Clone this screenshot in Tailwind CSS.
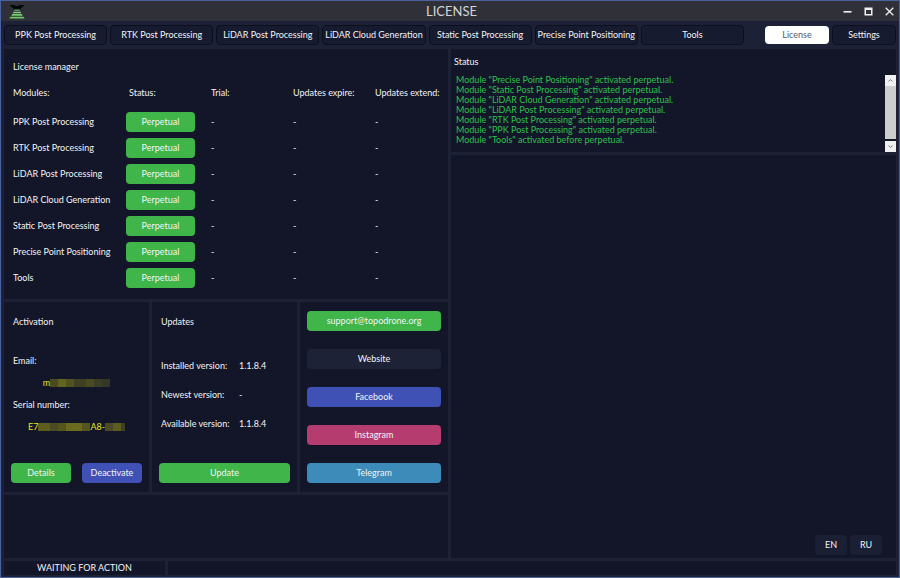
<!DOCTYPE html>
<html lang="en">

<head>
    <meta charset="UTF-8" />
    <meta name="viewport" content="width=device-width, initial-scale=1.0" />
    <title>License</title>
    <script src="https://cdn.jsdelivr.net/npm/@tailwindcss/browser@4"></script>
</head>

<body class="bg-[#1d2136]">
    <div class="flex h-screen flex-col border border-[#4a62a0] bg-[#1d2136] font-[Lato,sans-serif] text-[9px] leading-3 text-[#f2f3f6]">

        <!-- title bar -->
        <header class="flex h-5 shrink-0 items-center bg-[#303138] pr-[5px] pl-2">
            <div class="flex-1">
                <svg class="h-[15px] w-4" viewBox="0 0 16 15" fill="none">
                    <path d="M1 1h5v1h4V1h5v1.500h-2V4h-1.500v1.500h-7V4H3V2.500H1z" fill="#050608" />
                    <path d="M5.500 5.500h5l.5 1.500H5z" fill="#4f9457" />
                    <path d="M4.500 7.700h7l.7 1.600H3.800z" fill="#8cc487" />
                    <path d="M3.200 10h9.600l.8 1.800H2.400z" fill="#74d069" />
                    <path d="M1.600 12.700h12.800l1.300 1.800H.3z" fill="#6acb5f" />
                </svg>
            </div>
            <h1 class="text-[13px] leading-4 text-[#d3d4d8]">LICENSE</h1>
            <div class="flex flex-1 justify-end gap-3">
                <button aria-label="Minimize" class="h-[9px] w-[9px]">
                    <svg class="h-[9px] w-[9px]" viewBox="0 0 9 9"><path d="M0.500 4h8v1.600h-8z" fill="#f0f0f2" /></svg>
                </button>
                <button aria-label="Maximize" class="h-[9px] w-[9px]">
                    <svg class="h-[9px] w-[9px]" viewBox="0 0 9 9"><path d="M0.500 0.500h8v8h-8zM2 3v4h5V3z" fill="#f0f0f2" fill-rule="evenodd" /></svg>
                </button>
                <button aria-label="Close" class="h-[9px] w-[9px]">
                    <svg class="h-[9px] w-[9px]" viewBox="0 0 9 9"><path d="M.7.7l7.600 7.600M8.300.7L.7 8.300" stroke="#f0f0f2" stroke-width="1.300" /></svg>
                </button>
            </div>
        </header>

        <!-- modules -->
        <nav class="flex h-7 shrink-0 items-center gap-[3px] px-[3px]">
            <button class="h-5 min-w-0 flex-1 rounded-sm border border-[#0c0f1e] bg-[#171b30] whitespace-nowrap">PPK Post Processing</button>
            <button class="h-5 min-w-0 flex-1 rounded-sm border border-[#0c0f1e] bg-[#171b30] whitespace-nowrap">RTK Post Processing</button>
            <button class="h-5 min-w-0 flex-1 rounded-sm border border-[#0c0f1e] bg-[#171b30] whitespace-nowrap">LiDAR Post Processing</button>
            <button class="h-5 min-w-0 flex-1 rounded-sm border border-[#0c0f1e] bg-[#171b30] whitespace-nowrap">LiDAR Cloud Generation</button>
            <button class="h-5 min-w-0 flex-1 rounded-sm border border-[#0c0f1e] bg-[#171b30] whitespace-nowrap">Static Post Processing</button>
            <button class="h-5 min-w-0 flex-1 rounded-sm border border-[#0c0f1e] bg-[#171b30] whitespace-nowrap">Precise Point Positioning</button>
            <button class="h-5 min-w-0 flex-1 rounded-sm border border-[#0c0f1e] bg-[#171b30] whitespace-nowrap">Tools</button>
            <button class="ml-[18px] h-[18px] w-16 rounded-sm bg-white text-[#55586a]">License</button>
            <button class="h-5 w-16 rounded-sm border border-[#0c0f1e] bg-[#171b30]">Settings</button>
        </nav>

        <main class="grid min-h-0 flex-1 grid-cols-[444fr_445fr] gap-[3px] px-[3px]">
            <div class="flex min-w-0 flex-col gap-[3px]">
                <section class="bg-[#131628] px-[9px] pt-3 pb-2">
                    <h2>License manager</h2>
                    <table class="mt-3 w-full table-fixed text-left">
                        <thead>
                            <tr class="h-4">
                                <th class="w-[113px] p-0 font-normal">Modules:</th>
                                <th class="w-[85px] p-0 pl-[3px] font-normal">Status:</th>
                                <th class="w-[82px] p-0 font-normal">Trial:</th>
                                <th class="w-[82px] p-0 font-normal">Updates expire:</th>
                                <th class="p-0 font-normal whitespace-nowrap">Updates extend:</th>
                            </tr>
                            <tr class="h-2"></tr>
                        </thead>
                        <tbody id="modules"></tbody>
                    </table>
                </section>

                <div class="grid h-[190px] shrink-0 grid-cols-[145fr_145fr_148fr] gap-[3px]">
                    <section class="flex flex-col bg-[#131628] px-[7px] pt-[14px] pb-[9px]">
                        <h2 class="px-[2px]">Activation</h2>
                        <p class="mt-[27px] px-[2px]">Email:</p>
                        <p class="mt-[10px] flex items-center justify-center text-[#e6e61c]">
                            <span>m</span>
                            <span class="flex h-2">
                                <i class="w-2 bg-[#4a4b1f]"></i><i class="w-2 bg-[#62631f]"></i><i class="w-2 bg-[#515220]"></i><i class="w-3 bg-[#3e4023]"></i><i class="w-2 bg-[#4a4b22]"></i><i class="w-2 bg-[#3c3d25]"></i><i class="w-2 bg-[#343626]"></i>
                            </span>
                        </p>
                        <p class="mt-[10px] px-[2px]">Serial number:</p>
                        <p class="mt-[10px] flex items-center justify-center text-[#e6e61c]">
                            <span>E7</span>
                            <span class="flex h-2">
                                <i class="w-3 bg-[#5c5d1f]"></i><i class="w-2 bg-[#4a4b22]"></i><i class="w-2 bg-[#55561f]"></i><i class="w-4 bg-[#6a6b1e]"></i><i class="w-2 bg-[#55561f]"></i>
                            </span>
                            <span>A8-</span>
                            <span class="flex h-2">
                                <i class="w-2 bg-[#4a4b22]"></i><i class="w-2 bg-[#5c5d1f]"></i><i class="w-1 bg-[#3e4023]"></i>
                            </span>
                        </p>
                        <div class="mt-auto flex justify-between">
                            <button class="h-5 w-[60px] rounded-sm bg-[#3fb54a]">Details</button>
                            <button class="h-5 w-[60px] rounded-sm bg-[#3f51b5]">Deactivate</button>
                        </div>
                    </section>

                    <section class="flex flex-col bg-[#131628] px-[7px] pt-[14px] pb-[9px]">
                        <h2 class="px-[2px]">Updates</h2>
                        <dl class="mt-8 grid grid-cols-[78px_1fr] gap-y-[17px] px-[2px]">
                            <dt>Installed version:</dt>
                            <dd>1.1.8.4</dd>
                            <dt>Newest version:</dt>
                            <dd>-</dd>
                            <dt>Available version:</dt>
                            <dd>1.1.8.4</dd>
                        </dl>
                        <button class="mt-auto h-5 rounded-sm bg-[#3fb54a]">Update</button>
                    </section>

                    <section class="flex flex-col justify-between bg-[#131628] px-[7px] py-[9px] text-center leading-5">
                        <a href="mailto:support@topodrone.org" class="rounded-sm bg-[#3fb54a]">support@topodrone.org</a>
                        <a href="#" class="rounded-sm bg-[#1e2237]">Website</a>
                        <a href="#" class="rounded-sm bg-[#3f51b5]">Facebook</a>
                        <a href="#" class="rounded-sm bg-[#b53c6f]">Instagram</a>
                        <a href="#" class="rounded-sm bg-[#3c8bb8]">Telegram</a>
                    </section>
                </div>

                <section class="flex-1 bg-[#131628]"></section>
            </div>

            <div class="flex min-w-0 flex-col gap-[3px]">
                <section class="bg-[#131628] pt-[7px]">
                    <h2 class="px-[3px]">Status</h2>
                    <div class="mt-[7px] flex h-[77px] justify-between">
                        <div class="pl-[5px] leading-[10px] text-[#30c04e]">
                            <p>Module "Precise Point Positioning" activated perpetual.</p>
                            <p>Module "Static Post Processing" activated perpetual.</p>
                            <p>Module "LiDAR Cloud Generation" activated perpetual.</p>
                            <p>Module "LiDAR Post Processing" activated perpetual.</p>
                            <p>Module "RTK Post Processing" activated perpetual.</p>
                            <p>Module "PPK Post Processing" activated perpetual.</p>
                            <p>Module "Tools" activated before perpetual.</p>
                        </div>
                        <div class="flex w-[11px] flex-col">
                            <button aria-label="Scroll up" class="flex h-[11px] items-center justify-center bg-[#f0f0f0]">
                                <svg class="h-[5px] w-[5px]" viewBox="0 0 5 5" fill="none" stroke="#777"><path d="M.5 3.500l2-2 2 2" /></svg>
                            </button>
                            <div class="mb-[2px] flex-1 bg-[#cdcdcd]"></div>
                            <button aria-label="Scroll down" class="flex h-[11px] items-center justify-center bg-[#f0f0f0]">
                                <svg class="h-[5px] w-[5px]" viewBox="0 0 5 5" fill="none" stroke="#777"><path d="M.5 1.500l2 2 2-2" /></svg>
                            </button>
                        </div>
                    </div>
                </section>

                <section class="flex flex-1 items-end justify-end gap-[3px] bg-[#131628] px-[14px] pb-[3px]">
                    <button class="h-5 w-8 rounded-sm bg-[#1b1f33]">EN</button>
                    <button class="h-5 w-8 rounded-sm bg-[#1b1f33]">RU</button>
                </section>
            </div>
        </main>

        <footer class="flex shrink-0 gap-[3px] px-[3px] pt-[3px] pb-[2px] text-center leading-[14px]">
            <div class="w-[161px] bg-[#131628]">WAITING FOR ACTION</div>
            <div class="flex-1 bg-[#131628]"></div>
        </footer>
    </div>

    <script>
        const modules = [
            "PPK Post Processing",
            "RTK Post Processing",
            "LiDAR Post Processing",
            "LiDAR Cloud Generation",
            "Static Post Processing",
            "Precise Point Positioning",
            "Tools",
        ];

        modules.forEach((name) => {
            const row = document.createElement("tr");
            row.className = "h-[26px]";
            row.innerHTML = `
                <td class="p-0 whitespace-nowrap">${name}</td>
                <td class="p-0"><button class="block h-5 w-[69px] rounded-sm bg-[#3fb54a]">Perpetual</button></td>
                <td class="p-0">-</td>
                <td class="p-0">-</td>
                <td class="p-0">-</td>`;
            document.getElementById("modules").appendChild(row);
        });
    </script>
</body>

</html>
